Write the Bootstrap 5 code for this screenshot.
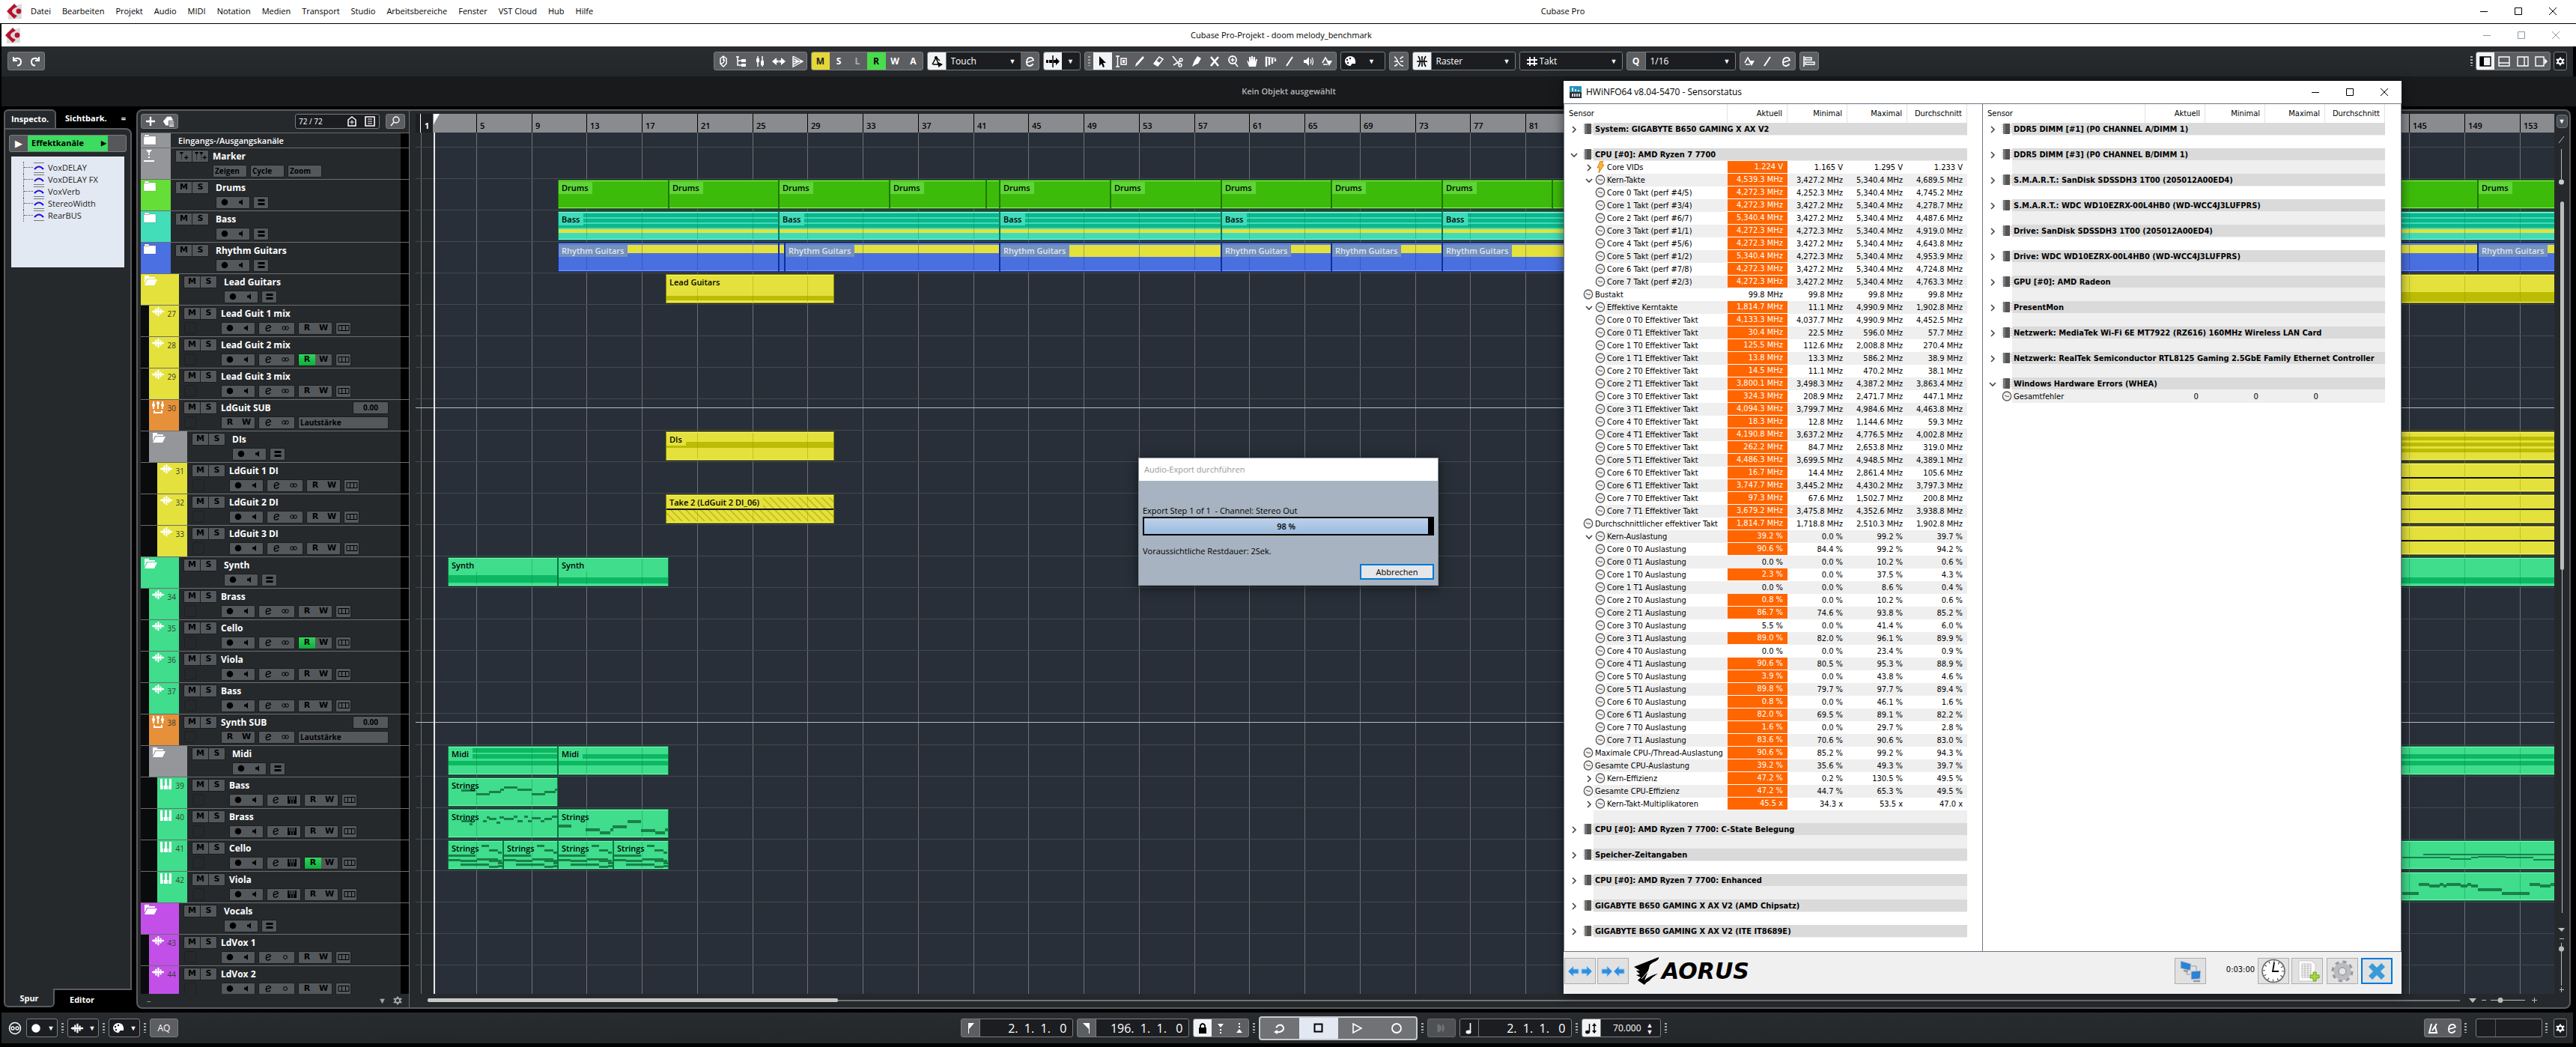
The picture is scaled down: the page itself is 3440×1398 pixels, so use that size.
<!DOCTYPE html>
<html lang="de">
<head>
<meta charset="utf-8">
<meta name="viewport" content="width=device-width, initial-scale=1">
<title>Cubase Pro-Projekt - doom melody_benchmark</title>
<link rel="stylesheet" href="https://cdn.jsdelivr.net/npm/bootstrap@5.3.0/dist/css/bootstrap.min.css">
<style>
:root{--panel:#26292c;--edge:#5b5c60;--ui:"Open Sans","Noto Sans",sans-serif;--tah:"DejaVu Sans Condensed","DejaVu Sans",sans-serif}
body{background:#000;color:#fff;font:11px/16px var(--ui);height:100vh;overflow:hidden}
button,input,select{font:inherit;color:inherit;background:none;border:0;padding:0;border-radius:0;min-width:0}
svg{display:block;flex:none}
.ic{width:20px;height:20px}
.menu-strip{background:#fff;color:#000;height:31px;font-size:11px;padding-right:8px}
.menu-strip a{color:#000;text-decoration:none;padding:0 8px 0 7px}
.app-name{padding-left:80px}
.title-strip{background:#fff;color:#000;height:30px;margin:1px 0 0 2px;font-size:11px;padding-right:4px}
.wb{width:46px;text-align:center}
.wb svg{margin:auto}
.bar{background:linear-gradient(#282c2f,#242729);margin-left:2px;margin-right:4px}
.tool-strip{height:40px;padding:0 8px}
.tool-row{gap:5px;padding-left:22px}
.info-strip{height:40px;background:#191a1c;color:#b4b6b8;margin:0 0 0 2px;font-weight:600}
.foot-strip{height:41px;margin-top:5px;margin-bottom:5px;padding:0 8px}
.grp{display:flex;height:25px;border:1px solid #7b7c80;border-radius:3px;background:#5d5e62;overflow:hidden;flex:none}
.grp button{width:25px;display:flex;align-items:center;justify-content:center;font-weight:700;font-size:12px}
.grp>button:first-child,.grp>button:last-child,.grp>span>button:last-child{width:24px}
.grp button.slim{width:16px}
.grp .on{background:#f2f3f4;color:#000}
.grp.dk{background:#1c1d21}
.fld{background:#1c1d21;display:flex;align-items:center;padding:0 6px;border-left:1px solid #7b7c80}
.fld select{appearance:none;flex:1;font-size:12px}
.tri{font-size:9px}
.dots{width:3px;height:13px;background:repeating-linear-gradient(#aaa 0 2px,transparent 2px 4px);flex:none}
.time{font:16px/22px var(--ui);text-align:right;width:124px;background:#1c1d21;padding-right:7px;border-left:1px solid #7b7c80}
.middle{padding-left:70px}
.transport{border:2px solid #c8c9cb;border-radius:4px;background:#717276;height:32px}
.transport.grp>button{width:52px}
/* inspector */
.insp{width:171px;margin-left:5px}
.insp-body{border:2px solid var(--edge);background:var(--panel);border-radius:0 8px 0 0;padding:7px 5px 0}
.tabs button{font-weight:700;font-size:11px;height:25px;text-align:center}
.tabs .act{background:var(--panel);border:2px solid var(--edge);border-bottom:0;border-radius:6px 6px 0 0;margin-bottom:-2px;position:relative;width:70px;height:25px}
.tabs.low .act{border:2px solid var(--edge);border-top:0;border-radius:0 0 6px 6px;margin:-2px 0 0;width:68px;padding-top:2px}
.fxhead{height:23px;border:1px solid #7b7c80;border-radius:3px;background:#56575b;display:flex;align-items:center;color:#000;overflow:hidden}
.fxhead .nm{background:#3bdc60;width:107px;height:23px;display:flex;align-items:center;justify-content:space-between;padding:0 2px 0 5px;font-weight:700}
.fxlist{background:#e3e9f2;color:#222;margin:6px 3px 0 3px;height:148px;padding:7px 0 0 16px;list-style:none}
.fxlist li{height:16px;display:flex;align-items:center;border-left:1px dotted #555}
.fxlist li:before{content:"";width:12px;border-top:1px dotted #555}
.fxlist svg{margin:0 5px 0 1px}
/* project frame */
.project{border:2px solid var(--edge);border-radius:8px;background:var(--panel);min-width:0;min-height:0;margin-right:7px}
.tlist{width:363px;padding-left:4px;border-right:1px solid #6b6d70;flex:none}
.thead{height:29px;padding:4px 5px 5px 0}
.thead .grp{height:20px}
.tracks{overflow:hidden;border-top:1px solid #6b6d70}
.trk{height:42px;border-bottom:1px solid #6b6d70;display:flex}
.trk .gap0{background:#0a0b0c;flex:none}
.trk .col{flex:none;position:relative;color:#fff;padding:1px 0 0 3px;display:flex;justify-content:space-between;width:auto}
.trk .num{color:#3a3d2f;font-size:10px;padding:2px 4px 0 0}
.trk .bod{flex:1;padding:2px 0 0 6px;display:grid;grid-template-columns:46px 1fr;grid-template-rows:18px 18px;row-gap:2px}
.trk .vu{width:11px;background:#000;flex:none}
.trk b{font-size:12px;line-height:17px}
.cell{display:flex;height:17px;background:#55585b;border:1px solid #1a1c1e;border-radius:2px;color:#000;overflow:hidden}
.cell button{width:21px;flex:1;display:flex;align-items:center;justify-content:center;font:700 11px/14px "DejaVu Sans",sans-serif}
.cell button+button.sp{border-left:1px solid #1a1c1e}
.cell .rec{background:linear-gradient(#2fd45c,#0fae3c)}
.void{width:16px;height:16px;border:1px solid #1d1f22;border-radius:3px;margin-left:1px}
.cell button.txtc{font:700 10px/14px var(--ui);padding:0 2px;text-align:left}
/* arrange */
.arr{min-width:0;position:relative;overflow:hidden;background:#282f38;flex:1;margin-left:8px}
.ruler{height:25px;background:#8a8b8f;position:relative;color:#000;margin-left:8px;overflow:hidden;flex:none}
.ruler span{position:absolute;top:0;bottom:0;border-left:1px solid #000;padding:8px 0 0 4px;font-size:11px;font-weight:600}
.ruler .pre{left:0;width:23px;background:#1c1e21;color:#fff;border:0;padding-left:12px;font-weight:700}
.lanes{position:relative;height:100%}
.lane{height:42px;border-bottom:1px solid #434950;position:relative}
.vl{position:absolute;top:0;bottom:0;width:1px;background:#6c7175}
.pre2{position:absolute;left:0;top:0;bottom:0;width:23px;background:rgba(36,40,41,.8)}
.cursorline{position:absolute;left:24px;top:0;bottom:0;width:2px;background:#e8e8e8}
.auto{position:absolute;left:0;right:0;top:11px;height:1px;background:#b4bec8}
.ev{position:absolute;top:1px;height:39px;border:1px solid;overflow:hidden}
.ev:before{content:"";position:absolute;inset:0;border:solid var(--hi);border-width:1px 0;z-index:2}
.ev .lb{position:absolute;left:0;top:2px;padding:0 5px 0 4px;height:16px;line-height:15px;font-size:11px;font-weight:600;white-space:nowrap;z-index:3}
.ev i{position:absolute}
.sidebar-r{width:20px;flex:none}
/* windows */
.win{position:absolute;z-index:20;color:#000;box-shadow:0 3px 14px rgba(0,0,0,.55)}
.hw{left:2088px;top:108px;width:1119px;background:#f0f0f0;font:11px/16px var(--tah)}
.hw-title{height:30px;background:#fff;font:12px/30px var(--ui)}
.pane{background:#fff;border:1px solid #6f7680;height:1133px;overflow:hidden}
.sens{table-layout:fixed;border-collapse:separate;border-spacing:0}
.sens th{height:25px;font-weight:400;text-align:right;padding:0 6px 0 0;border-right:1px solid #e2e2e2;vertical-align:middle;white-space:nowrap}
.sens th:first-child{text-align:left;padding-left:6px}
.sens td{height:17px;padding:0 6px 0 0;text-align:right;white-space:nowrap;line-height:17px}
.sens td:first-child{padding:0}
.nmc{display:flex;height:17px}
.nmc .tg{width:16px;flex:none;display:flex;justify-content:center;align-items:center}
.nmc .tx{flex:1;padding-left:2px;text-align:left}
.sens .alt td:not(:first-child),.sens .alt .tx{background:#efefef}
.sens td.hot{background:#ff6600!important;color:#fff;border-bottom:1px solid #fff;line-height:16px}
.sens .hd .tx{background:#dadada;font-weight:700;border-bottom:1px solid #efefef}
.sens .hd td{text-align:left}
.hwb{width:42px;height:35px;background:#e1e1e1;border:1px solid #adadad;display:flex;align-items:center;justify-content:center}
.hwb.foc{border:2px solid #0078d7}
.aorus{font:italic 700 30px/36px "DejaVu Sans",sans-serif}
.exp{left:1520px;top:611px;width:401px;background:#a7b3c0;border:1px solid #8b949e;font:11px/16px var(--ui)}
.exp-t{background:#fff;color:#9a9a9a;height:30px;line-height:30px;padding-left:7px}
.pbar{height:25px;border:2px solid #000;background:#000;color:#000}
.pbar>div{height:21px;background:linear-gradient(#bdd1ea,#9bbadd);text-align:center;font-weight:600;line-height:21px}
.exp button{width:99px;height:21px;border:2px solid #0078d7;background:#e4e6e8;color:#000}
</style>
<script src="https://cdn.jsdelivr.net/npm/bootstrap@5.3.0/dist/js/bootstrap.bundle.min.js"></script>
</head>
<body class="d-flex flex-column">
<svg width="0" height="0" class="position-absolute" aria-hidden="true"><defs>
<symbol id="cub" viewBox="0 0 22 22"><path d="M3 7 L21 1 V21 L3 22Z" fill="#dcdcdc"/><path d="M11 1 L15 5 Q8 8 8 11 Q8 14 15 17 L11 21 L1 11Z" fill="#b5122b"/><circle cx="17" cy="11" r="3.4" fill="#b5122b"/></symbol>
<symbol id="undo" viewBox="0 0 20 20"><path d="M5 4v5h5M5.500 8.500C8 4.500 15 5 15 10.500c0 3-2 5-5 5" fill="none" stroke="currentColor" stroke-width="2"/></symbol>
<symbol id="redo" viewBox="0 0 20 20"><path d="M15 4v5h-5M14.500 8.500C12 4.500 5 5 5 10.500c0 3 2 5 5 5" fill="none" stroke="currentColor" stroke-width="2"/></symbol>
<symbol id="diam" viewBox="0 0 20 20"><path d="M10 3l4 3v7l-4 4-4-4V6zM10 4v5M7 13q5-1 4-6" fill="none" stroke="currentColor" stroke-width="1.500"/></symbol>
<symbol id="tree" viewBox="0 0 20 20"><path d="M5 3v12h5M5 9h5M3 4h4" fill="none" stroke="currentColor" stroke-width="1.500"/><path d="M10 7h6v4h-6zM10 13h6v4h-6z" fill="currentColor"/></symbol>
<symbol id="bars" viewBox="0 0 20 20"><path d="M3 3v14" stroke="currentColor" stroke-width="1.600"/><path d="M5 5h8v3H5zM5 11h12v3H5z" fill="none" stroke="currentColor" stroke-width="1.400"/></symbol>
<symbol id="fad" viewBox="0 0 20 20"><path d="M7 3v14M13 3v14" stroke="currentColor" stroke-width="1.500"/><path d="M5 6h4v5H5zM11 9h4v6h-4z" fill="currentColor"/></symbol>
<symbol id="lr" viewBox="0 0 20 20"><path d="M1 10l6-5v3.500h6V5l6 5-6 5v-3.500H7V15z" fill="currentColor"/><path d="M10 5v10" stroke="#5d5e62"/></symbol>
<symbol id="ffw" viewBox="0 0 20 20"><path d="M4 3l13 7-13 7V3M4 6l8 4-8 4M17 10H4" fill="none" stroke="currentColor" stroke-width="1.400"/></symbol>
<symbol id="autom" viewBox="0 0 20 20"><path d="M4 14l5-9 5 4M9 5l4 11M5 14h8" fill="none" stroke="currentColor" stroke-width="1.500"/><path d="M12 11l6 3-6 4z" fill="currentColor"/><circle cx="9" cy="5" r="2" fill="currentColor"/></symbol>
<symbol id="eico" viewBox="0 0 20 20"><path d="M6 11.500 15 8.500C14 3.500 8 4 6.500 8 5 13 6.500 16 9.500 16c2.500 0 4-1 5-3" fill="none" stroke="currentColor" stroke-width="1.800"/></symbol>
<symbol id="asc" viewBox="0 0 20 20"><path d="M10 2v16" stroke="currentColor" stroke-width="1.500"/><path d="M1 8h3v4H1zM5 8h4v4H5zM11 8h3V5l5 5-5 5v-3h-3z" fill="currentColor"/></symbol>
<symbol id="arrow" viewBox="0 0 20 20"><path d="M6 3l9 9H11l2 5-2 1-2-5-3 3z" fill="currentColor"/></symbol>
<symbol id="range" viewBox="0 0 20 20"><path d="M3 3h5M5.500 3v14M3 17h5" stroke="currentColor" stroke-width="1.500"/><path d="M10 6h7v8h-7z" fill="none" stroke="currentColor" stroke-width="1.500"/><path d="M12 8h3v4h-3z" fill="currentColor"/></symbol>
<symbol id="pen" viewBox="0 0 20 20"><path d="M4 17l1-4 9-10 2 2-9 10z" fill="currentColor"/></symbol>
<symbol id="era" viewBox="0 0 20 20"><path d="M4 13l7-9 5 3-7 9z" fill="none" stroke="currentColor" stroke-width="1.500"/><path d="M4 13l3-4 5 3-3 4z" fill="currentColor"/></symbol>
<symbol id="sci" viewBox="0 0 20 20"><path d="M4 3l9 11M5 15l10-6" stroke="currentColor" stroke-width="1.600"/><circle cx="14" cy="15" r="2" fill="none" stroke="currentColor" stroke-width="1.400"/><circle cx="15" cy="8" r="2" fill="none" stroke="currentColor" stroke-width="1.400"/></symbol>
<symbol id="glue" viewBox="0 0 20 20"><path d="M8 9l4-6 5 3-4 7-3 1-5 3z" fill="currentColor"/></symbol>
<symbol id="xx" viewBox="0 0 20 20"><path d="M5 4l10 12M15 4L5 16" stroke="currentColor" stroke-width="2.600"/></symbol>
<symbol id="zoomi" viewBox="0 0 20 20"><circle cx="9" cy="8" r="5" fill="none" stroke="currentColor" stroke-width="1.800"/><path d="M12 12l4 5M6.500 8h5M9 5.500v5" stroke="currentColor" stroke-width="1.600"/></symbol>
<symbol id="hand" viewBox="0 0 20 20"><path d="M6 17L3 9l2 1 1 2V4h2v6l1-7h2v7l1-6h2v7l1-4h2l-2 10z" fill="currentColor"/></symbol>
<symbol id="comp" viewBox="0 0 20 20"><path d="M4 4v13M8 5v10M12 6v7M16 7v3" stroke="currentColor" stroke-width="2.400"/><path d="M3 4l14 2" stroke="currentColor"/></symbol>
<symbol id="lin" viewBox="0 0 20 20"><path d="M6 16l8-12" stroke="currentColor" stroke-width="2"/></symbol>
<symbol id="spk" viewBox="0 0 20 20"><path d="M4 8h3l4-4v12l-4-4H4z" fill="currentColor"/><path d="M13 7q2 3 0 6M15 5q3 5 0 10" fill="none" stroke="currentColor" stroke-width="1.200"/></symbol>
<symbol id="curv" viewBox="0 0 20 20"><path d="M4 12l4-7 3 5M5 14h6" fill="none" stroke="currentColor" stroke-width="1.600"/><path d="M9 9h8l-4 7z" fill="currentColor"/></symbol>
<symbol id="pal" viewBox="0 0 20 20"><path d="M10 3a7 6.500 0 1 0 0 13c2 0 1-3 3-3h4C18 7 15 3 10 3z" fill="currentColor"/><g fill="#1c1d21"><circle cx="6" cy="8" r="1.200"/><circle cx="10" cy="6" r="1.200"/><circle cx="7" cy="12" r="1.200"/></g></symbol>
<symbol id="ring" viewBox="0 0 20 20"><circle cx="10" cy="10" r="7.500" fill="none" stroke="currentColor" stroke-width="1.500"/><circle cx="7" cy="10" r="2" fill="none" stroke="currentColor" stroke-width="1.300"/><circle cx="13" cy="10" r="2" fill="none" stroke="currentColor" stroke-width="1.300"/></symbol>
<symbol id="addt" viewBox="0 0 20 20"><path d="M8 3h6l3 6H10v7H6L2 10z" fill="currentColor"/><path d="M11 11h7M11 14h7M11 17h7" stroke="currentColor" stroke-width="1.600"/></symbol>
<symbol id="xfade" viewBox="0 0 20 20"><path d="M4 4c4 0 4 12 12 12M4 16q3 0 4-3M12 7q1-3 4-3M4 10h4M12 10h4" fill="none" stroke="currentColor" stroke-width="1.500"/></symbol>
<symbol id="snap" viewBox="0 0 20 20"><path d="M5 3q5 7 0 14M15 3q-5 7 0 14M10 3v14M3 10h14" fill="none" stroke="currentColor" stroke-width="1.600"/></symbol>
<symbol id="hash" viewBox="0 0 20 20"><path d="M7 4v12M13 4v12M3 8h14M3 13h14" stroke="currentColor" stroke-width="1.800"/></symbol>
<symbol id="gear" viewBox="0 0 20 20"><circle cx="10" cy="10" r="4.500" fill="none" stroke="currentColor" stroke-width="3"/><path d="M10 2v3M10 15v3M2.500 6l3 1.500M14.500 12.500l3 1.500M2.500 14l3-1.500M14.500 7.500l3-1.500" stroke="currentColor" stroke-width="3"/></symbol>
<symbol id="lay1" viewBox="0 0 20 20"><path d="M3 4h14v12H3z" fill="none" stroke="currentColor" stroke-width="1.400"/><path d="M3 4h5v12H3z" fill="currentColor"/></symbol>
<symbol id="lay2" viewBox="0 0 20 20"><path d="M3 4h14v12H3zM3 12h14" fill="none" stroke="currentColor" stroke-width="1.400"/></symbol>
<symbol id="lay3" viewBox="0 0 20 20"><path d="M3 4h14v12H3zM12 4v12" fill="none" stroke="currentColor" stroke-width="1.400"/></symbol>
<symbol id="lay4" viewBox="0 0 20 20"><path d="M3 4h11v12H3z" fill="none" stroke="currentColor" stroke-width="1.400"/><path d="M15 6l4 4-4 4z" fill="currentColor"/></symbol>
<symbol id="fold" viewBox="0 0 18 16"><path d="M2 1h6v2h9v11H1V3h1z" fill="currentColor" stroke="rgba(0,0,0,.25)" stroke-width=".5"/><path d="M1 3.500h7" stroke="rgba(0,0,0,.3)"/></symbol>
<symbol id="foldo" viewBox="0 0 20 16"><path d="M2 1h6v2h8v2H5L2 12z" fill="currentColor"/><path d="M6 6h13l-4 8H2z" fill="currentColor"/></symbol>
<symbol id="wave" viewBox="0 0 20 16"><path d="M1 8h18M4 6v4M7 3v10M10.500 1v14M14 4v8M17 6.500v3" stroke="currentColor" stroke-width="2.400"/></symbol>
<symbol id="mix" viewBox="0 0 18 18"><path d="M3 1v10M9 1v10M15 1v10M4 13v3h10v-3" fill="none" stroke="currentColor" stroke-width="2"/><path d="M1 6h4M7 3h4M13 6h4" stroke="currentColor" stroke-width="3"/></symbol>
<symbol id="keys" viewBox="0 0 18 16"><path d="M1 1h3v9h1v5H1zM6 15v-5h1V1h3v9h1v5zM12 15v-5h1V1h3v14z" fill="currentColor"/></symbol>
<symbol id="mark" viewBox="0 0 16 18"><path d="M4 1h8L8 6z" fill="currentColor"/><path d="M8 6v8" stroke="currentColor" stroke-width="2" stroke-dasharray="2 2"/><path d="M1 16h14" stroke="currentColor" stroke-width="2"/></symbol>
<symbol id="mk1" viewBox="0 0 20 14"><path d="M3 1h6L6 5z" fill="currentColor"/><path d="M6 5v7" stroke="currentColor" stroke-dasharray="1 1"/><path d="M13 6v6M10 9h6" stroke="currentColor" stroke-width="1.400"/></symbol>
<symbol id="mk2" viewBox="0 0 20 14"><path d="M1 1h6L4 5zM8 1h6l-3 4z" fill="currentColor"/><path d="M4 5v7M11 5v7" stroke="currentColor" stroke-dasharray="1 1"/><path d="M16 6v6M13 9h6" stroke="currentColor" stroke-width="1.400"/></symbol>
<symbol id="dot" viewBox="0 0 12 12"><circle cx="6" cy="6" r="4.300" fill="currentColor"/></symbol>
<symbol id="mon" viewBox="0 0 12 12"><path d="M3 4.500h2L8 2v8L5 7.500H3z" fill="currentColor"/></symbol>
<symbol id="eq" viewBox="0 0 12 12"><path d="M1.500 3.500h9M1.500 8.500h9" stroke="currentColor" stroke-width="3"/></symbol>
<symbol id="inf" viewBox="0 0 12 12"><circle cx="4" cy="6" r="2.300" fill="none" stroke="currentColor"/><circle cx="8" cy="6" r="2.300" fill="none" stroke="currentColor"/></symbol>
<symbol id="mono" viewBox="0 0 12 12"><circle cx="6" cy="6" r="2.500" fill="none" stroke="currentColor"/></symbol>
<symbol id="lan" viewBox="0 0 16 12"><path d="M1 2.500h14v7H1zM5.500 3v6M10.500 3v6" fill="none" stroke="currentColor"/></symbol>
<symbol id="ky" viewBox="0 0 12 12"><path d="M0 1h2v5h1V1h1v10H0zM5 11V1h.500v5h1V1H7v10zM8 11V1h1v5h1V1h2v10z" fill="currentColor"/></symbol>
<symbol id="chip" viewBox="0 0 14 16"><path d="M0 3h14M0 6h14M0 9h14M0 12h14" stroke="#b8b8b8"/><path d="M2 1h9v14H2z" fill="#555"/><path d="M2 1h3v14H2z" fill="#777"/></symbol>
<symbol id="clk" viewBox="0 0 14 16"><ellipse cx="7" cy="8" rx="5.700" ry="6" fill="#f0f0f0" stroke="#5a5a5a" stroke-width="1.300"/><path d="M4 7l3 1.300h3" fill="none" stroke="#555"/></symbol>
<symbol id="bolt" viewBox="0 0 14 16"><path d="M7 0h4L9 5h3l-7 11 1-7H3z" fill="#ffb62e" stroke="#c5701a" stroke-width=".8"/></symbol>
<symbol id="cr" viewBox="0 0 10 10"><path d="M3 1l4 4-4 4" fill="none" stroke="#444" stroke-width="1.600"/></symbol>
<symbol id="cd" viewBox="0 0 10 10"><path d="M1 3l4 4 4-4" fill="none" stroke="#444" stroke-width="1.600"/></symbol>
<symbol id="fxi" viewBox="0 0 14 14"><path d="M0 .5h14M0 13.500h14" stroke="#777"/><path d="M1 9q6-7 12 0" fill="none" stroke="#11e" stroke-width="2"/><circle cx="6" cy="5.500" r="1" fill="#d22"/></symbol>
<symbol id="met" viewBox="0 0 20 20"><path d="M7 4l-3 12h10l-2-8M8 13l6-9" fill="none" stroke="currentColor" stroke-width="2"/></symbol>
<symbol id="wmin" viewBox="0 0 12 12"><path d="M1 6.500h10" stroke="currentColor"/></symbol>
<symbol id="wmax" viewBox="0 0 12 12"><path d="M1.500 1.500h9v9h-9z" fill="none" stroke="currentColor"/></symbol>
<symbol id="wx" viewBox="0 0 12 12"><path d="M1 1l10 10M11 1L1 11" stroke="currentColor"/></symbol>
</defs></svg>

<nav class="menu-strip d-flex align-items-center" aria-label="Hauptmenü">
  <svg width="22" height="22" class="ms-2 me-1"><use href="#cub"/></svg>
  <span class="d-flex" id="menu"></span>
  <span class="flex-grow-1 text-center app-name">Cubase Pro</span>
  <span class="d-flex" data-win></span>
</nav>
<header class="title-strip d-flex align-items-center">
  <svg width="22" height="22" class="ms-1"><use href="#cub"/></svg>
  <span class="flex-grow-1 text-center ps-5 ms-5">Cubase Pro-Projekt - doom melody_benchmark</span>
  <span class="d-flex text-secondary opacity-75" data-win></span>
</header>

<div class="bar tool-strip d-flex align-items-center">
  <div class="grp me-auto" data-ic="undo redo"></div>
  <div class="d-flex tool-row">
    <div class="grp" data-ic="diam tree fad lr ffw"></div>
    <div class="grp"><button style="background:#e5d737;color:#222">M</button><button>S</button><button class="opacity-50">L</button><button style="background:#48dc4b;color:#000">R</button><button>W</button><button>A</button></div>
    <div class="grp"><button class="on"><svg class="ic"><use href="#autom"/></svg></button><label class="fld" style="width:100px"><select aria-label="Automationsmodus"><option>Touch</option></select><span class="tri">▼</span></label><button><svg class="ic"><use href="#eico"/></svg></button></div>
    <div class="grp dk"><button class="on"><svg class="ic"><use href="#asc"/></svg></button><button><span class="tri">▼</span></button></div>
    <div class="grp"><span class="d-flex align-items-center ps-1 pe-1"><span class="dots"></span></span><button class="on"><svg class="ic"><use href="#arrow"/></svg></button><span class="d-flex" data-ic="range pen era sci glue xx zoomi hand comp lin spk curv"></span></div>
    <div class="grp dk"><button><svg class="ic"><use href="#pal"/></svg></button><button style="width:34px"><span class="tri">▼</span></button></div>
    <div class="grp" data-ic="xfade"></div>
    <div class="grp"><button class="on"><svg class="ic"><use href="#snap"/></svg></button><label class="fld" style="width:112px"><select aria-label="Rastertyp"><option>Raster</option></select><span class="tri">▼</span></label></div>
    <div class="grp dk"><label class="fld border-0" style="width:136px"><svg class="ic"><use href="#hash"/></svg><select aria-label="Rastermaß"><option>Takt</option></select><span class="tri">▼</span></label></div>
    <div class="grp"><button>Q</button><label class="fld" style="width:120px"><select aria-label="Quantisierung"><option>1/16</option></select><span class="tri">▼</span></label></div>
    <div class="grp" data-ic="curv lin eico"></div>
    <div class="grp"><button><svg class="ic"><use href="#bars"/></svg></button></div>
  </div>
  <div class="d-flex gap-1 ms-auto align-items-center"><span class="dots"></span><div class="grp"><button class="on"><svg class="ic"><use href="#lay1"/></svg></button><span class="d-flex" data-ic="lay2 lay3 lay4"></span></div><div class="grp dk"><button class="slim"><svg width="14" height="14"><use href="#gear"/></svg></button></div></div>
</div>
<div class="info-strip d-flex align-items-center justify-content-center">Kein Objekt ausgewählt</div>

<main class="d-flex flex-grow-1" style="min-height:0;margin-top:4px;gap:6px">
  <aside class="insp d-flex flex-column">
    <div class="tabs d-flex"><button class="act">Inspecto.</button><button class="ps-2 ms-1">Sichtbark.</button><span class="ms-auto pe-2 fw-bold align-self-center">=</span></div>
    <div class="insp-body flex-grow-1">
      <div class="fxhead"><span class="text-white text-center" style="width:24px;font-size:13px">▶</span><span class="nm">Effektkanäle<span class="tri">▶</span></span></div>
      <ul class="fxlist" id="fxList"></ul>
    </div>
    <div class="tabs low d-flex"><button class="act">Spur</button><button class="ps-3 ms-1">Editor</button></div>
  </aside>
  <section class="project d-flex flex-grow-1">
    <div class="tlist d-flex flex-column">
      <div class="thead d-flex align-items-center">
        <div class="grp"><button aria-label="Spur hinzufügen"><svg width="14" height="14"><path d="M7 1v12M1 7h12" stroke="#fff" stroke-width="2.400"/></svg></button><button aria-label="Spurpreset"><svg width="18" height="18"><use href="#addt"/></svg></button></div>
        <div class="grp dk ms-auto"><span class="ps-1" style="width:62px;line-height:18px;font-size:10px">72 / 72</span><button><svg width="14" height="14" viewBox="0 0 14 14"><path d="M7 1l5 4v8H2V5z" fill="none" stroke="#fff" stroke-width="1.500"/><path d="M7 5v6M4 8h6" stroke="#fff"/></svg></button><button><svg width="14" height="14" viewBox="0 0 14 14"><path d="M1 1h12v12H1z" fill="none" stroke="#fff" stroke-width="1.600"/><path d="M4 4h6M4 7h6M4 10h6" stroke="#fff"/></svg></button></div>
        <div class="grp ms-2"><button aria-label="Suchen"><svg width="14" height="14" viewBox="0 0 14 14"><circle cx="8" cy="5" r="4" fill="none" stroke="#fff" stroke-width="1.400"/><path d="M5 8l-4 5" stroke="#fff" stroke-width="1.400"/></svg></button></div>
      </div>
      <div class="tracks flex-grow-1" id="tracks"></div>
      <div class="d-flex align-items-center pe-2 ps-2" style="height:18px;color:#a2a4a6">–<span class="ms-auto me-2">▼</span><svg width="14" height="14"><use href="#gear"/></svg></div>
    </div>
    <div class="d-flex flex-column flex-grow-1" style="min-width:0;padding-top:4px">
      <div class="ruler" id="ruler"></div>
      <div class="arr" id="arr"><div class="lanes" id="lanes"></div></div>
      <div class="d-flex align-items-center" style="height:18px;padding:0 14px 0 24px">
        <svg width="100%" height="8" class="flex-shrink-1"><path d="M0 4h2714" stroke="#c0bcbc"/><rect width="548" y="1" height="5" rx="2" fill="#c8c8c8"/></svg>
        <svg width="106" height="14" viewBox="0 0 106 14"><g fill="#bbb"><path d="M6 4h10l-5 6z"/><path d="M23 6h6v1h-6zM35 6h46v1h-46zM90 6h7v1h-7zM93 3h1v7h-1z"/><circle cx="48" cy="6.500" r="3.500"/></g></svg>
      </div>
    </div>
    <div class="sidebar-r d-flex flex-column align-items-center" style="padding-top:5px">
      <button class="border border-secondary rounded-1 bg-secondary bg-opacity-50 tri" style="width:15px;height:18px">▼</button>
      <svg width="12" height="90" viewBox="0 0 12 90"><path d="M2 20l7-9" stroke="#bbb"/><path d="M5 28h1v40H5z" fill="#bbb"/><circle cx="5.500" cy="72" r="3.500" fill="#ccc"/></svg>
      <div class="rounded-pill" style="width:5px;height:492px;background:#bbb;margin-top:8px"></div>
      <div class="flex-grow-1" style="width:1px;background:#bbb"></div>
      <svg width="12" height="106" viewBox="0 0 12 106"><g fill="#bbb"><path d="M1 20h9l-4 5zM3 34h6v1H3zM5 40h1v57H5zM3 102h6v1H3zM5 99h1v7H5z"/><circle cx="5.500" cy="48" r="3.500"/></g></svg>
      <div style="height:20px"></div>
    </div>
  </section>
</main>

<footer class="bar foot-strip d-flex align-items-center">
  <div class="d-flex align-items-center" style="gap:5px;flex:1">
    <svg class="ic"><use href="#ring"/></svg>
    <div class="grp dk"><button><svg width="16" height="16"><use href="#dot"/></svg></button><button class="slim"><span class="tri">▼</span></button></div><span class="dots"></span>
    <div class="grp dk"><button><svg width="18" height="16"><use href="#wave"/></svg></button><button class="slim"><span class="tri">▼</span></button></div><span class="dots"></span>
    <div class="grp dk"><button><svg class="ic"><use href="#pal"/></svg></button><button class="slim"><span class="tri">▼</span></button></div><span class="dots"></span>
    <div class="grp"><button class="fw-normal" style="width:36px">AQ</button></div>
  </div>
  <div class="d-flex align-items-center middle" style="gap:5px">
    <div class="grp"><button><svg width="14" height="16" viewBox="0 0 14 16"><path d="M2 1h10L5 9v6H4V1" fill="#fff"/></svg></button><input class="time" value="2.  1.  1.   0" aria-label="Linker Locator"></div>
    <div class="grp"><button><svg width="14" height="16" viewBox="0 0 14 16"><path d="M2 1h9v14h-1V9z" fill="#fff"/></svg></button><input class="time" value="196.  1.  1.   0" aria-label="Rechter Locator"></div>
    <div class="grp"><button class="on"><svg width="14" height="16" viewBox="0 0 14 16"><path d="M2 7h10v8H2z"/><path d="M4 8V4q3-4 6 0v4" fill="none" stroke="#000" stroke-width="1.800"/></svg></button><button><svg width="14" height="18" viewBox="0 0 14 18"><path d="M3 3h8l-4 5zM6 10h2v2H6zM6 14h2v2H6z" fill="#fff"/></svg></button><button><svg width="14" height="18" viewBox="0 0 14 18"><path d="M3 15h8l-4-5zM6 6h2v2H6zM6 2h2v2H6z" fill="#fff"/></svg></button></div><span class="dots"></span>
    <div class="grp transport"><button><svg class="ic" viewBox="0 0 20 20"><path d="M4 15h6q6-2 5-6-2-5-7-3l-3 3" fill="none" stroke="#fff" stroke-width="2"/><path d="M2 15l5-3v6z" fill="#fff"/></svg></button><button style="background:#e3e9f3"><svg width="14" height="14"><path d="M1.500 1.500h10v10h-10z" fill="none" stroke="#000" stroke-width="2"/></svg></button><button><svg width="16" height="16"><path d="M2 2l11 6-11 6z" fill="none" stroke="#fff" stroke-width="1.600"/></svg></button><button><svg width="16" height="16"><circle cx="8" cy="8" r="6" fill="none" stroke="#fff" stroke-width="1.800"/></svg></button></div><span class="dots"></span>
    <div class="grp opacity-75"><button style="width:36px"><svg width="16" height="16"><path d="M3 3a5 5 0 0 1 0 10zM9 2q5 6 0 12" fill="#888" stroke="#888"/></svg></button></div>
    <div class="grp"><button style="background:#1c1d21"><svg width="14" height="18"><ellipse cx="6" cy="14" rx="3.500" ry="2.500" fill="#fff"/><path d="M8.500 2v12" stroke="#fff" stroke-width="1.600"/></svg></button><input class="time" value="2.  1.  1.   0" aria-label="Position"></div><span class="dots"></span>
    <div class="grp"><button class="on"><svg width="18" height="18"><ellipse cx="4" cy="14" rx="3" ry="2.300"/><path d="M6.500 3v11M13 3v12" stroke="#000" stroke-width="1.500"/><path d="M10 6l3-4 3 4zM10 12l3 4 3-4z"/></svg></button><input class="time" value="70.000" aria-label="Tempo" style="width:62px;font-size:12px"><span class="d-flex flex-column justify-content-center tri" style="background:#1c1d21;width:18px;line-height:9px"><i class="fst-normal">▲</i><i class="fst-normal">▼</i></span></div><span class="dots"></span>
  </div>
  <div class="d-flex align-items-center justify-content-end" style="gap:4px;flex:1"><div class="grp" data-ic="met eico"></div><span class="dots"></span><div class="grp dk ms-2"><span style="width:26px;border-right:1px solid #555"></span><span style="width:61px"></span></div><span class="dots"></span><div class="grp dk ms-1"><button class="slim"><svg width="14" height="14"><use href="#gear"/></svg></button></div></div>
</footer>

<section class="win exp" role="dialog" aria-label="Audio-Export">
  <div class="exp-t">Audio-Export durchführen</div>
  <div class="px-1" style="padding-top:32px;margin:0 1px">Export Step 1 of 1 &nbsp;- Channel: Stereo Out
    <div class="pbar"><div style="width:98.500%">98 %</div></div>
    <div style="padding:13px 0 9px">Voraussichtliche Restdauer: 2Sek.</div>
    <div class="text-end" style="padding-bottom:7px"><button>Abbrechen</button></div>
  </div>
</section>

<section class="win hw" aria-label="HWiNFO64">
  <div class="hw-title d-flex align-items-center"><svg width="16" height="16" class="ms-2 me-1"><rect width="16" height="9" fill="#2a8fb8"/><rect y="8" width="16" height="8" fill="#2a2f36"/><path d="M4 2v5M8 4v3M12 5v2M4 10v4M7 10v4M10 10v4M13 10v4" stroke="#fff" stroke-width="1.600"/></svg><span class="flex-grow-1" style="padding-left:2px">HWiNFO64 v8.04-5470 - Sensorstatus</span><span class="d-flex" data-win></span></div>
  <div class="d-flex"><div class="pane" style="width:559px;border-right:0"><table class="sens" style="width:538px" id="sl"></table></div><div class="pane flex-grow-1"><table class="sens" style="width:537px" id="sr"></table></div></div>
  <div class="d-flex align-items-center" style="height:56px;padding:0 12px 5px 1px">
    <button class="hwb" aria-label="Erweitern"><svg width="34" height="20" viewBox="0 0 34 20"><path d="M1 10l7-7v4h7v6H8v4zM33 10l-7-7v4h-7v6h7v4z" fill="#2e8fe0" stroke="#9cc8ee"/></svg></button>
    <button class="hwb" aria-label="Verkleinern" style="margin-left:2px"><svg width="34" height="20" viewBox="0 0 34 20"><path d="M16 10L9 3v4H2v6h7v4zM18 10l7-7v4h7v6h-7v4z" fill="#2e8fe0" stroke="#9cc8ee"/></svg></button>
    <svg width="38" height="38" viewBox="0 0 38 38" style="margin-left:6px"><path d="M1 13 34 0q1 3-5 6-8 3-8 9-3 9-6 16 8-7 18-9-8 5-11 9-4 2-7 6L6 31l4-4-6-3 5-1-5-5 5 0z"/><path d="M30 8 11 29" stroke="#fff"/></svg><span class="aorus">AORUS</span>
    <span class="ms-auto"></span>
    <button class="hwb" aria-label="Netzwerk"><svg width="34" height="32" viewBox="0 0 34 32"><path d="M15 9h10v8M17 20h-5v-6" fill="none" stroke="#999"/><path d="M4 2l14 4-1 9-13-3z" fill="#2b82d8" stroke="#ccc"/><path d="M18 16l13-1-1 11-12 1z" fill="#2b82d8" stroke="#ccc"/><path d="M8 15l6 1M21 29l9 0" stroke="#999" stroke-width="2.500"/></svg></button>
    <span style="width:69px;padding:0 4px 3px 0" class="text-end">0:03:00</span>
    <button class="hwb" aria-label="Uhr"><svg width="34" height="33" viewBox="0 0 34 33"><circle cx="17" cy="16.500" r="15" fill="#fff" stroke="#666" stroke-width="1.500"/><circle cx="17" cy="16.500" r="12.500" fill="none" stroke="#333" stroke-width="3" stroke-dasharray="1 5.545"/><path d="M18 5l-2 12h8" fill="none" stroke="#000" stroke-width="1.800"/></svg></button>
    <button class="hwb" aria-label="Bericht" style="margin-left:3px"><svg width="34" height="32" viewBox="0 0 34 32"><path d="M6 2h17l5 5v22H6z" fill="#fcfcfc" stroke="#ccc"/><path d="M10 6h12v18H10zM10 9h12M10 12h12M10 15h12M10 18h12M10 21h12M14 6v18M18 6v18" fill="none" stroke="#bbb"/><path d="M25 17h4v4h4v4h-4v4h-4v-4h-4v-4h4z" fill="#a5d83a" stroke="#6fa012"/></svg></button>
    <button class="hwb" aria-label="Einstellungen" style="margin-left:5px"><svg width="34" height="32" viewBox="0 0 34 32"><circle cx="17" cy="16" r="12.500" fill="none" stroke="#999" stroke-width="4" stroke-dasharray="5 4.817"/><circle cx="17" cy="16" r="8" fill="none" stroke="#b9bcc0" stroke-width="7"/><circle cx="17" cy="16" r="5" fill="#e4e4e4" stroke="#888"/></svg></button>
    <button class="hwb foc" aria-label="Schließen" style="margin-left:4px"><svg width="26" height="26" viewBox="0 0 26 26"><path d="M2 7l5-5 6 6 6-6 5 5-6 6 6 6-5 5-6-6-6 6-5-5 6-6z" fill="#3a9ad9"/></svg></button>
  </div>
</section>

<script>
const $=id=>document.getElementById(id);
const use=(n,w=20,h=w)=>`<svg width="${w}" height="${h}"><use href="#${n}"/></svg>`;
$('menu').innerHTML='Datei Bearbeiten Projekt Audio MIDI Notation Medien Transport Studio Arbeitsbereiche Fenster VST_Cloud Hub Hilfe'.split(' ').map(t=>`<a href="#">${t.replace('_',' ')}</a>`).join('');
document.querySelectorAll('[data-win]').forEach(e=>e.innerHTML=[['wmin','Minimieren'],['wmax','Maximieren'],['wx','Schließen']].map(([n,l])=>`<button class="wb" aria-label="${l}">${use(n,12)}</button>`).join(''));
document.querySelectorAll('[data-ic]').forEach(e=>{
  e.innerHTML=e.dataset.ic.split(' ').map(n=>`<button aria-label="${n}">${use(n)}</button>`).join('');
});
$('fxList').innerHTML=['VoxDELAY','VoxDELAY FX','VoxVerb','StereoWidth','RearBUS'].map(t=>`<li>${use('fxi',14)}${t}</li>`).join('');

/* track list: kind, name, colour, indent, number, read-enabled */
const Y='#e4e13c',G='#3fdd8c',O='#e6903a',V='#c250e8',N='#95969a';
const T=[['f','Drums','#66de38',0],['f','Bass','#42ddb9',0],['f','Rhythm Guitars','#4a70e2',0],['o','Lead Guitars',Y,0],
['a','Lead Guit 1 mix',Y,1,27],['a','Lead Guit 2 mix',Y,1,28,1],['a','Lead Guit 3 mix',Y,1,29],['s','LdGuit SUB',O,1,30],
['o','DIs',N,1],['a','LdGuit 1 DI',Y,2,31],['a','LdGuit 2 DI',Y,2,32],['a','LdGuit 3 DI',Y,2,33],
['o','Synth',G,0],['a','Brass',G,1,34],['a','Cello',G,1,35,1],['a','Viola',G,1,36],['a','Bass',G,1,37],['s','Synth SUB',O,1,38],
['o','Midi',N,1],['m','Bass',G,2,39],['m','Brass',G,2,40],['m','Cello',G,2,41,1],['m','Viola',G,2,42],
['o','Vocals',V,0],['v','LdVox 1',V,1,43],['v','LdVox 2',V,1,44]];
const cell=(w,...b)=>`<span class="cell" style="width:${w}px">${b.map(x=>`<button ${x[1]?`class="${x[1]}"`:''}>${x[0]}</button>`).join('')}</span>`;
const I={f:['fold',18,16],o:['foldo',20,16],a:['wave',18,14],v:['wave',18,14],s:['mix',18,18],m:['keys',18,16]};
let h=`<div class="trk" style="height:20px"><span class="col" style="width:40px;background:${N}">${use('fold',18,16)}</span><span class="bod d-block fw-semibold" style="padding-left:10px">Eingangs-/Ausgangskanäle</span><span class="vu"></span></div>
<div class="trk"><span class="col" style="width:40px;background:${N}">${use('mark',16,18)}</span><span class="bod">${cell(45,[use('mk1',18,13)],[use('mk2',18,13),'sp'])}<b class="ps-1">Marker</b><span></span><span class="d-flex gap-1 ps-1">${['Zeigen','Cycle','Zoom'].map(t=>`<span class="cell" style="width:46px"><button class="txtc justify-content-start">${t}</button></span>`).join('')}</span></span><span class="vu"></span></div>`;
T.forEach(([k,n,c,d,num,r])=>{
  const fld=k=='f'||k=='o', w=k=='o'?51:40, rec=[use('dot',12)],mon=[use('mon',12)],e=[use('eico',14)],R=['R',r?'rec':''],W=['W'];
  let b;
  if(fld)b=cell(46,rec,mon)+cell(21,[use('eq',12)]);
  else if(k=='s')b=cell(46,R,W)+cell(49,e,[use('inf',12)])+`<span class="cell" style="width:121px"><button class="txtc justify-content-start">Lautstärke</button></span>`;
  else b=cell(46,rec,mon)+cell(k=='m'?46:49,e,[use(k=='m'?'ky':k=='v'?'mono':'inf',12)])+cell(46,R,W)+cell(21,[use('lan',16,12)]);
  h+=`<div class="trk"><span class="gap0" style="width:${d*11}px"></span><span class="col" style="width:${w}px;background:${c}">${use(...I[k])}${num?`<span class="num">${num}</span>`:''}</span>
  <span class="bod">${cell(45,['M'],['S','sp'])}<span class="d-flex ${fld?'ps-2':'ps-1'}"><b>${n}</b>${k=='s'?'<span class="cell ms-auto me-3" style="width:48px"><button class="txtc">0.00</button></span>':''}</span>
  ${fld?'<span></span>':'<span class="void"></span>'}<span class="d-flex gap-1 ${fld?'ps-1 ms-1':'ps-1'}">${b}</span></span><span class="vu"></span></div>`;
});
$('tracks').innerHTML=h;

/* timeline: bar number to pixel */
const X=b=>7+(b-1)*18.44;
let ru='',ln='';
/* bar numbers are left out where the sensor window lies over the ruler */
for(let b=5;b<=153;b+=4)if(b<=81||b>=145)ru+=`<span style="left:${Math.round(X(b))}px">${b}</span>`;
for(let b=1;b<=153;b+=4){ln+=`<div class="vl" style="left:${Math.round(X(b))}px"></div>`}
$('ruler').innerHTML=`<span class="pre">1</span><i class="position-absolute" style="left:6px;top:0;bottom:0;width:1px;background:#fff"></i><svg class="position-absolute" style="left:24px" width="10" height="14"><path d="M0 0h8L1 12v2H0z" fill="#fff"/></svg>`+ru;
const P={g:['#3dbb0b','#1d7a00','#8ff06a','#5fd537','#000'],b:['#3fdcb9','#067a5c','#8ff5dc','#3fdcb9','#000'],r:['#4a70e0','#0d2f9c','#7f9cf2','#7490bd','#dfe6f2'],y:['#e4e13c','#8a8800','#f8f66c','#e4e13c','#000'],s:['#3fdd8c','#067a42','#7ff5b4','#3fdd8c','#000']};
/* event: palette, start bar, end bar, label, shapes [x,width,y,height,colour]; width -1 runs to the end */
const ev=(p,a,z,t,sh=[],ex='')=>{const c=P[p],l=Math.round(X(a)-1),w=Math.round(X(z)-1)-l;let s='';
  if(p!='g')for(let b=5;b<=153;b+=4)if(b>a&&b<z)s+=`<i style="left:${Math.round(X(b))-l-1}px;top:0;bottom:0;width:1px;background:${c[1]};opacity:.35"></i>`;
  return `<div class="ev" style="left:${l}px;width:${w}px;background:${c[0]};border-color:${c[1]};--hi:${c[2]}">${sh.map(([x,ww,y,hh,k])=>`<i style="left:${x}px;${ww<0?'right:0':`width:${ww}px`};top:${y}px;height:${hh}px;background:${k}"></i>`).join('')}${ex}${s}${t?`<span class="lb" style="background:${p=='s'&&t=='Strings'?'none':c[3]};color:${c[4]}">${t}</span>`:''}</div>`};
const L={};
const Dk='#0db78c',Ye='#e4e13c',Dy='#bcbc05',Dg='#0db864',Nt='#1a8049';
const db=[11,19,27,35,42,43,51,59,67,75,83,91];
L[0]=db.slice(0,-1).map((b,i)=>ev('g',b,db[i+1],b==42?'':b<83?'Drums':'')).join('')+ev('g',140,150,'')+ev('g',150,170,'Drums');
const bs=[[0,-1,2,5,Dk],[0,-1,9,5,Dk],[0,-1,16,5,Dk],[0,-1,23,5,Ye]];
L[1]=[11,27,43,59,75].map(b=>ev('b',b,b+16,'Bass',bs)).join('')+ev('b',140,170,'',bs);
const ry=(hh)=>[[0,-1,2,hh,Ye]];
L[2]=ev('r',11,27,'Rhythm Guitars',ry(11))+ev('r',27,27.4,'',ry(11))+ev('r',27.4,43,'Rhythm Guitars',ry(11))+ev('r',43,59,'Rhythm Guitars',ry(16))+ev('r',59,67,'Rhythm Guitars',ry(11))+ev('r',67,75,'Rhythm Guitars',ry(11))+ev('r',75,91,'Rhythm Guitars',ry(16))+ev('r',140,150,'',ry(11))+ev('r',150,170,'Rhythm Guitars',ry(11));
L[3]=ev('y',18.8,31,'Lead Guitars',[[0,-1,28,6,Dy]])+ev('y',140,170,'',[[0,-1,23,14,Dy]]);
L[8]=ev('y',18.8,31,'DIs',[[0,-1,13,8,Dy]])+ev('y',140,170,'',[[0,-1,6,5,Dy],[0,-1,14,5,Dy],[0,-1,22,5,Dy]]);
const wl='<i style="left:0;right:0;top:18px;height:2px;background:#111"></i>';
L[9]=L[11]=ev('y',140,170,'',[],wl);
L[10]=ev('y',18.8,31,'Take 2 (LdGuit 2 DI_06)',[[0,-1,3,32,'repeating-linear-gradient(45deg,#c9c420 0 2px,#e4e13c 2px 7px)']],wl)+ev('y',140,170,'',[],wl);
L[12]=ev('s',3,11,'Synth',[[0,-1,23,10,Dg]])+ev('s',11,19,'Synth',[[0,-1,26,8,Dg]])+ev('s',140,170,'',[[0,-1,26,8,Dg]]);
L[18]=ev('s',3,11,'Midi',[[0,-1,2,6,Dg],[0,-1,10,6,Dg],[0,-1,19,6,Dg]])+ev('s',11,19,'Midi',[[0,-1,10,6,Dg],[0,-1,19,6,Dg]])+ev('s',140,170,'',[[0,-1,10,6,Dg],[0,-1,19,6,Dg]]);
const nt=(a,hh=3)=>a.map(([x,w,y])=>[x,w,y,hh,Nt]);
L[19]=ev('s',3,11,'Strings',nt([[17,19,15],[37,18,20],[54,16,17],[69,5,14],[74,18,11],[92,19,14],[111,18,20],[128,15,17],[142,4,14]]));
L[20]=ev('s',3,11,'Strings',nt([[17,14,14],[28,4,18],[46,5,14],[51,4,9],[54,10,11],[64,5,16],[68,6,9],[74,13,11],[87,5,8],[92,7,14],[101,5,8],[106,5,14],[111,12,10],[123,5,14],[128,10,11],[138,8,8]]))+ev('s',11,19,'Strings',nt([[0,17,20],[36,19,25],[55,14,29],[69,4,25],[72,19,21],[92,18,14],[110,19,26],[129,13,29],[142,4,25]],4));
const q=nt([[0,36,18],[44,10,5],[54,12,11],[66,5,14],[0,16,24],[38,28,23],[16,22,25],[54,17,25],[16,38,30],[66,6,28],[54,12,33],[66,6,32]]);
L[21]=[3,7,11,15].map(b=>ev('s',b,b+4,'Strings',q)).join('')+ev('s',144,170,'',nt([[9,64,21],[73,28,23],[101,9,21],[110,37,20],[147,37,21],[184,40,24],[37,187,17]],2));
L[22]=ev('s',144,170,'',nt([[9,22,26],[31,14,14],[45,14,16],[59,5,14],[64,4,16],[68,19,14],[87,9,16],[96,5,14],[101,9,16],[110,32,21],[142,37,26],[179,14,14],[193,14,16],[207,5,14],[212,6,16]],4));
let la='<div class="lane" style="height:20px"></div><div class="lane"></div>';
T.forEach((t,i)=>la+=`<div class="lane">${L[i]||''}${t[0]=='s'?'<div class="auto"></div>':''}</div>`);
$('lanes').innerHTML='<div class="pre2"></div>'+ln+la+'<div class="cursorline"></div>';

/* sensors: depth/state, name, values; '*' marks a highlighted current value */
const row=r=>{
  const [type,txt,...v]=r;
  if(type=='H'||type=='h')return`<tr class="hd"><td colspan="5"><div class="nmc"><span class="tg" style="width:25px">${use(type=='H'?'cd':'cr',10)}</span>${use('chip',14,16)}<span class="tx">${txt}</span></div></td></tr>`;
  if(type=='-'||type=='=')return`<tr class="${type=='='?'alt':''}"><td colspan="5"><div class="nmc"><span style="width:39px"></span><span class="tx"></span></div></td></tr>`;
  const deep=type[0]=='2',st=type[1],alt=type[2]=='a';
  const hot=v[0]&&v[0][0]=='*';
  return`<tr class="${alt?'alt':''}"><td><div class="nmc"><span class="tg" style="width:25px"></span>${deep?`<span class="tg">${st=='v'?use('cd',10):st=='>'?use('cr',10):''}</span>`:''}${use(st=='>'&&txt=='Core VIDs'?'bolt':'clk',14,16)}<span class="tx">${txt}</span></div></td>${[0,1,2,3].map(j=>`<td class="${j==0&&hot?'hot':''}">${(v[j]||'').replace('*','')}</td>`).join('')}</tr>`};
const head=w=>`<thead><tr><th style="width:${w}px">Sensor</th>${['Aktuell','Minimal','Maximal','Durchschnitt'].map(t=>`<th style="width:80px">${t}</th>`).join('')}</tr></thead>`;
const S=[['h','System: GIGABYTE B650 GAMING X AX V2'],['-'],['H','CPU [#0]: AMD Ryzen 7 7700']];
let a=false;const add=(ty,n,u,s)=>{S.push([ty+(a?'a':'.'),n,...s.split(' ').map(x=>x+' '+u)]);a=!a};
add('2>','Core VIDs','V','*1.224 1.165 1.295 1.233');
add('2v','Kern-Takte','MHz','*4,539.3 3,427.2 5,340.4 4,689.5');
['#4/5)|*4,272.3 4,252.3 5,340.4 4,745.2','#3/4)|*4,272.3 3,427.2 5,340.4 4,278.7','#6/7)|*5,340.4 3,427.2 5,340.4 4,487.6','#1/1)|*4,272.3 4,272.3 5,340.4 4,919.0','#5/6)|*4,272.3 3,427.2 5,340.4 4,643.8','#1/2)|*5,340.4 4,272.3 5,340.4 4,953.9','#7/8)|*4,272.3 3,427.2 5,340.4 4,724.8','#2/3)|*4,272.3 3,427.2 5,340.4 4,763.3'].forEach((s,i)=>{const[p,v]=s.split('|');add('2 ',`Core ${i} Takt (perf ${p}`,'MHz',v)});
add('1 ','Bustakt','MHz','99.8 99.8 99.8 99.8');
add('2v','Effektive Kerntakte','MHz','*1,814.7 11.1 4,990.9 1,902.8');
['*4,133.3 4,037.7 4,990.9 4,452.5','*30.4 22.5 596.0 57.7','*125.5 112.6 2,008.8 270.4','*13.8 13.3 586.2 38.9','*14.5 11.1 470.2 38.1','*3,800.1 3,498.3 4,387.2 3,863.4','*324.3 208.9 2,471.7 447.1','*4,094.3 3,799.7 4,984.6 4,463.8','*18.3 12.8 1,144.6 59.3','*4,190.8 3,637.2 4,776.5 4,002.8','*262.2 84.7 2,653.8 319.0','*4,486.3 3,699.5 4,948.5 4,389.1','*16.7 14.4 2,861.4 105.6','*3,747.7 3,445.2 4,430.2 3,797.3','*97.3 67.6 1,502.7 200.8','*3,679.2 3,475.8 4,352.6 3,938.8'].forEach((v,i)=>add('2 ',`Core ${i>>1} T${i&1} Effektiver Takt`,'MHz',v));
add('1 ','Durchschnittlicher effektiver Takt','MHz','*1,814.7 1,718.8 2,510.3 1,902.8');
add('2v','Kern-Auslastung','%','*39.2 0.0 99.2 39.7');
['*90.6 84.4 99.2 94.2','0.0 0.0 10.2 0.6','*2.3 0.0 37.5 4.3','0.0 0.0 8.6 0.4','*0.8 0.0 10.2 0.6','*86.7 74.6 93.8 85.2','5.5 0.0 41.4 6.0','*89.0 82.0 96.1 89.9','0.0 0.0 23.4 0.9','*90.6 80.5 95.3 88.9','*3.9 0.0 43.8 4.6','*89.8 79.7 97.7 89.4','*0.8 0.0 46.1 1.6','*82.0 69.5 89.1 82.2','*1.6 0.0 29.7 2.8','*83.6 70.6 90.6 83.0'].forEach((v,i)=>add('2 ',`Core ${i>>1} T${i&1} Auslastung`,'%',v));
add('1 ','Maximale CPU-/Thread-Auslastung','%','*90.6 85.2 99.2 94.3');
add('1 ','Gesamte CPU-Auslastung','%','*39.2 35.6 49.3 39.7');
add('2>','Kern-Effizienz','%','*47.2 0.2 130.5 49.5');
add('1 ','Gesamte CPU-Effizienz','%','*47.2 44.7 65.3 49.5');
add('2>','Kern-Takt-Multiplikatoren','x','*45.5 34.3 53.5 47.0');
S.push(['='],['h','CPU [#0]: AMD Ryzen 7 7700: C-State Belegung'],['='],['h','Speicher-Zeitangaben'],['-'],['h','CPU [#0]: AMD Ryzen 7 7700: Enhanced'],['='],['h','GIGABYTE B650 GAMING X AX V2 (AMD Chipsatz)'],['-'],['h','GIGABYTE B650 GAMING X AX V2 (ITE IT8689E)']);
$('sl').innerHTML=head(218)+'<tbody>'+S.map(row).join('')+'</tbody>';
const R2=[['h','DDR5 DIMM [#1] (P0 CHANNEL A/DIMM 1)'],['-'],['h','DDR5 DIMM [#3] (P0 CHANNEL B/DIMM 1)'],['='],['h','S.M.A.R.T.: SanDisk SDSSDH3 1T00 (205012A00ED4)'],['-'],['h','S.M.A.R.T.: WDC WD10EZRX-00L4HB0 (WD-WCC4J3LUFPRS)'],['='],['h','Drive: SanDisk SDSSDH3 1T00 (205012A00ED4)'],['-'],['h','Drive: WDC WD10EZRX-00L4HB0 (WD-WCC4J3LUFPRS)'],['='],['h','GPU [#0]: AMD Radeon'],['='],['h','PresentMon'],['='],['h','Netzwerk: MediaTek Wi-Fi 6E MT7922 (RZ616) 160MHz Wireless LAN Card'],['='],['h','Netzwerk: RealTek Semiconductor RTL8125 Gaming 2.5GbE Family Ethernet Controller'],['='],['H','Windows Hardware Errors (WHEA)'],['1 a','Gesamtfehler','0&nbsp;','0&nbsp;','0&nbsp;','']];
$('sr').innerHTML=head(217)+'<tbody>'+R2.map(row).join('')+'</tbody>';
</script>
</body>
</html>
